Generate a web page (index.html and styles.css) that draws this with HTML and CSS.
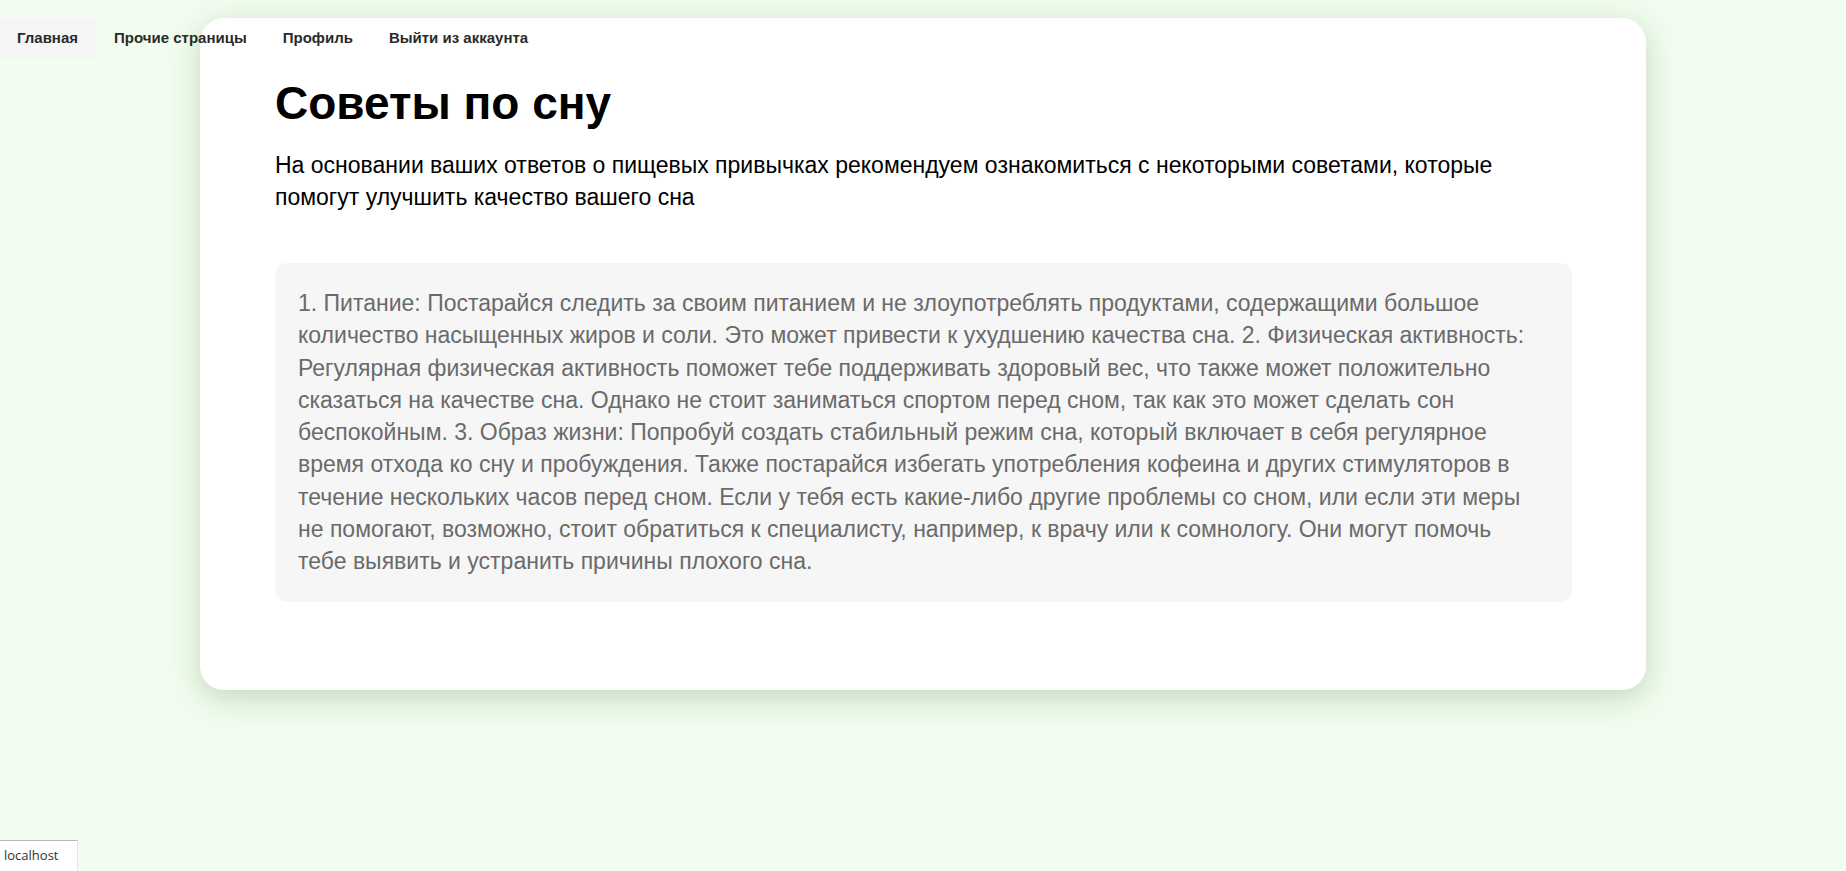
FILE: index.html
```html
<!DOCTYPE html>
<html lang="ru">
<head>
<meta charset="utf-8">
<title>Советы по сну</title>
<link rel="stylesheet" href="styles.css">
</head>
<body>
<nav class="nav">
  <a class="nav-item active" href="#">Главная</a>
  <a class="nav-item" href="#">Прочие страницы</a>
  <a class="nav-item" href="#">Профиль</a>
  <a class="nav-item" href="#">Выйти из аккаунта</a>
</nav>
<main class="card">
  <h1 class="title">Советы по сну</h1>
  <p class="lead">На основании ваших ответов о пищевых привычках рекомендуем ознакомиться с некоторыми советами, которые помогут улучшить качество вашего сна</p>
  <div class="tips">1. Питание: Постарайся следить за своим питанием и не злоупотреблять продуктами, содержащими большое количество насыщенных жиров и соли. Это может привести к ухудшению качества сна. 2. Физическая активность: Регулярная физическая активность поможет тебе поддерживать здоровый вес, что также может положительно сказаться на качестве сна. Однако не стоит заниматься спортом перед сном, так как это может сделать сон беспокойным. 3. Образ жизни: Попробуй создать стабильный режим сна, который включает в себя регулярное время отхода ко сну и пробуждения. Также постарайся избегать употребления кофеина и других стимуляторов в течение нескольких часов перед сном. Если у тебя есть какие-либо другие проблемы со сном, или если эти меры не помогают, возможно, стоит обратиться к специалисту, например, к врачу или к сомнологу. Они могут помочь тебе выявить и устранить причины плохого сна.</div>
</main>
<div class="status">localhost</div>
</body>
</html>
```
FILE: styles.css
```css
html, body {
  margin: 0;
  padding: 0;
}
body {
  background: #f1fdef;
  font-family: "Liberation Sans", Arial, sans-serif;
  min-height: 871px;
  padding-top: 18px;
  box-sizing: border-box;
}
.nav {
  position: absolute;
  top: 18px;
  left: 0;
  display: flex;
  z-index: 2;
}
.nav-item {
  display: block;
  padding: 0 19px 0 17px;
  height: 40px;
  line-height: 40px;
  font-size: 15px;
  font-weight: bold;
  color: #2a2a2a;
  text-decoration: none;
}
.nav-item.active {
  background: #f5f5f5;
}
.card {
  width: 1446px;
  margin: 0 auto;
  box-sizing: border-box;
  background: #ffffff;
  border-radius: 24px;
  padding: 58px 74px 88px 75px;
  box-shadow: 0 8px 30px rgba(70, 110, 50, 0.26);
}
.title {
  margin: 0;
  font-size: 46px;
  line-height: 55px;
  font-weight: bold;
  color: #000;
}
.lead {
  margin: 18px 0 50px;
  font-size: 23px;
  line-height: 32px;
  color: #000;
}
.tips {
  background: #f6f6f6;
  border-radius: 12px;
  padding: 24px 28px 24px 23px;
  font-size: 23px;
  line-height: 32.3px;
  color: #6a6a6a;
}
.status {
  position: fixed;
  left: 0;
  bottom: 0;
  width: 78px;
  height: 31px;
  box-sizing: border-box;
  background: #ffffff;
  border-top: 1px solid #b9b9b9;
  border-right: 1px solid #e6e6e6;
  font-family: "Open Sans", "Noto Sans", sans-serif;
  font-size: 13px;
  line-height: 29px;
  padding-left: 4px;
  color: #333;
}
```
